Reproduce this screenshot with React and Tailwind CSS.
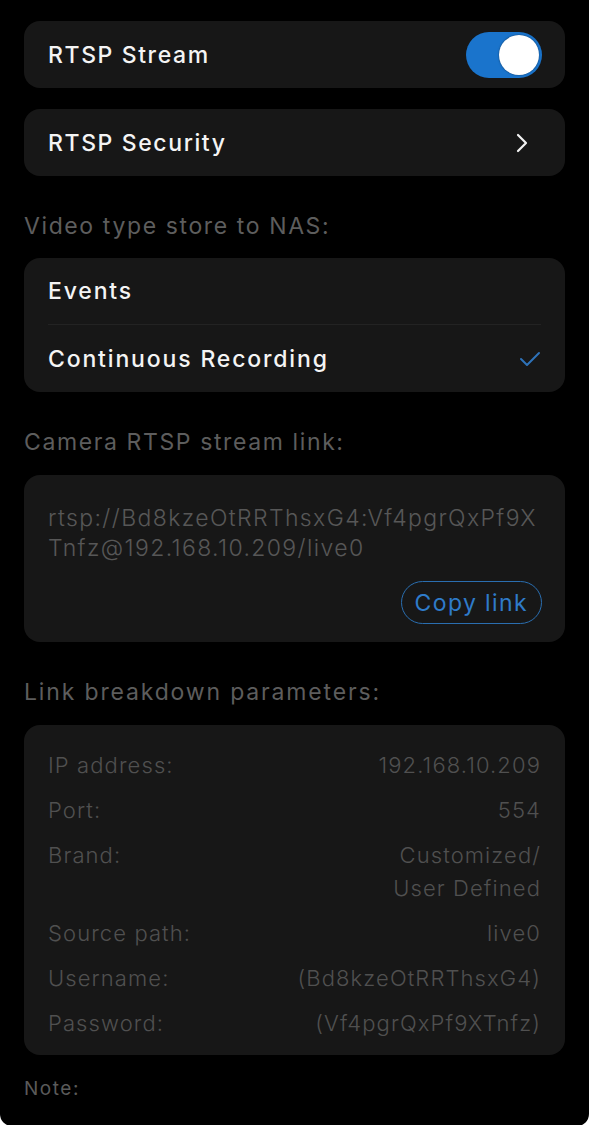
import React, { useState } from 'react';

const font = { fontFamily: 'Inter, "Liberation Sans", sans-serif' };

function Toggle({ on, onChange }) {
  return (
    <button
      type="button"
      onClick={() => onChange(!on)}
      className={`relative flex h-[46px] w-[76px] items-center rounded-full px-[3px] ${on ? 'bg-[#1a74cc] justify-end' : 'bg-[#3a3a3a] justify-start'}`}
    >
      <span className="h-[40px] w-[40px] rounded-full bg-white shadow-[0_0_2px_rgba(0,0,0,0.5)]" />
    </button>
  );
}

function Chevron() {
  return (
    <svg width="14" height="20" viewBox="0 0 14 20" fill="none" stroke="#f2f2f2" strokeWidth="2.2" strokeLinecap="round" strokeLinejoin="round">
      <path d="M3 2l8 8-8 8" />
    </svg>
  );
}

function Check() {
  return (
    <svg width="22" height="18" viewBox="0 0 22 18" fill="none" stroke="#2e72b8" strokeWidth="2" strokeLinecap="round" strokeLinejoin="round">
      <path d="M2 9l6 6L20 3" />
    </svg>
  );
}

function Param({ label, children }) {
  return (
    <div className="flex justify-between gap-4">
      <span>{label}</span>
      <span className="text-right">{children}</span>
    </div>
  );
}

export default function App() {
  const [stream, setStream] = useState(true);
  const [videoType, setVideoType] = useState('continuous');

  return (
    <div className="min-h-[1125px] bg-white" style={font}>
      <div className="min-h-[1125px] rounded-b-[12px] bg-black px-[24px] pt-[21px] pb-[22px] text-[22px] leading-[30px]">
        {/* RTSP Stream */}
        <div className="flex h-[67px] items-center justify-between rounded-[16px] bg-[#171717] pl-[24px] pr-[23px] text-[#f4f4f4]">
          <span className="text-[23px] font-medium tracking-[0.07em]">RTSP Stream</span>
          <Toggle on={stream} onChange={setStream} />
        </div>

        {/* RTSP Security */}
        <div className="mt-[21px] flex h-[67px] items-center justify-between rounded-[16px] bg-[#171717] pl-[24px] pr-[36px] text-[#f4f4f4]">
          <span className="text-[23px] font-medium tracking-[0.07em]">RTSP Security</span>
          <Chevron />
        </div>

        <p className="mt-[35px] mb-[17px] text-[23px] tracking-[0.07em] text-[#5d5d5d]">Video type store to NAS:</p>

        <div className="rounded-[16px] bg-[#171717] pl-[24px] pr-[24px] text-[#f4f4f4]">
          <button
            type="button"
            onClick={() => setVideoType('events')}
            className="flex h-[67px] w-full items-center justify-between border-b border-[#232323] text-[23px] font-medium tracking-[0.08em]"
          >
            <span>Events</span>
            {videoType === 'events' && <Check />}
          </button>
          <button
            type="button"
            onClick={() => setVideoType('continuous')}
            className="flex h-[67px] w-full items-center justify-between text-[23px] font-medium tracking-[0.08em]"
          >
            <span>Continuous Recording</span>
            {videoType === 'continuous' && <Check />}
          </button>
        </div>

        <p className="mt-[35px] mb-[18px] text-[23px] tracking-[0.07em] text-[#5d5d5d]">Camera RTSP stream link:</p>

        <div className="rounded-[16px] bg-[#171717] pt-[28px] pb-[18px] pl-[24px] pr-[23px]">
          <p className="text-[23px] font-light tracking-[0.06em] text-[#575757]">
            rtsp://Bd8kzeOtRRThsxG4:Vf4pgrQxPf9X<br />Tnfz@192.168.10.209/live0
          </p>
          <div className="mt-[18px] flex justify-end">
            <button
              type="button"
              className="h-[43px] rounded-full border-[1.5px] border-[#2a6eb0] px-[13px] text-[23px] tracking-[0.06em] text-[#2f7bc9]"
            >
              Copy link
            </button>
          </div>
        </div>

        <p className="mt-[35px] mb-[18px] text-[23px] tracking-[0.08em] text-[#5d5d5d]">Link breakdown parameters:</p>

        <div className="flex flex-col gap-[12px] rounded-[16px] bg-[#171717] pt-[24px] pb-[15px] pl-[24px] pr-[24px] font-light leading-[33px] tracking-[0.05em] text-[#505050]">
          <Param label="IP address:">192.168.10.209</Param>
          <Param label="Port:">554</Param>
          <Param label="Brand:">Customized/<br />User Defined</Param>
          <Param label="Source path:">live0</Param>
          <Param label="Username:">(Bd8kzeOtRRThsxG4)</Param>
          <Param label="Password:">(Vf4pgrQxPf9XTnfz)</Param>
        </div>

        <p className="mt-[19px] text-[19px] tracking-[0.08em] text-[#5a5a5a]">Note:</p>
      </div>
    </div>
  );
}
